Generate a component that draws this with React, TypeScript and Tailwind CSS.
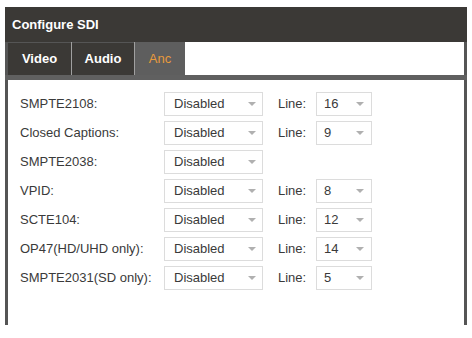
import React from "react";

const rows: { label: string; line?: string }[] = [
  { label: "SMPTE2108:", line: "16" },
  { label: "Closed Captions:", line: "9" },
  { label: "SMPTE2038:" },
  { label: "VPID:", line: "8" },
  { label: "SCTE104:", line: "12" },
  { label: "OP47(HD/UHD only):", line: "14" },
  { label: "SMPTE2031(SD only):", line: "5" },
];

function Arrow() {
  return (
    <svg width="8" height="4" viewBox="0 0 8 4" className="shrink-0">
      <path d="M0 0 L8 0 L4 4 Z" fill="#b0b0b0" />
    </svg>
  );
}

function Select({ value, width, pad }: { value: string; width: string; pad: string }) {
  return (
    <div className={`${width} h-full border border-[#dcdcdc] bg-white flex items-center justify-between ${pad}`}>
      <span>{value}</span>
      <Arrow />
    </div>
  );
}

export default function App() {
  return (
    <div
      className="w-[472px] h-[338px] bg-white text-[13px] text-[#3a3a3a]"
      style={{ fontFamily: '"Liberation Sans", Arial, sans-serif' }}
    >
      <div className="ml-[5px] pt-[7px] w-[462px] flex flex-col">
        <div className="h-[35px] bg-[#3b3936] text-white font-bold flex items-center pl-[7px] pt-[1px]">
          Configure SDI
        </div>
        <div className="flex flex-col h-[283px] border-x-[3px] border-[#555555]">
          <div className="h-[33px] flex bg-white">
            <div className="w-[63px] bg-[#3b3936] border-t border-[#555] text-white font-bold flex items-center justify-center">
              Video
            </div>
            <div className="w-px bg-[#a0a0a0]" />
            <div className="w-[62px] bg-[#3b3936] border-t border-[#555] text-white font-bold flex items-center justify-center">
              Audio
            </div>
            <div className="w-px bg-[#a0a0a0]" />
            <div className="w-[50px] bg-[#5e5e5e] text-[#e89a3c] flex items-center justify-center">
              Anc
            </div>
          </div>
          <div className="h-[5px] bg-[#606060] -mx-[3px]" />
          <div className="flex flex-col gap-[5px] pt-[12px] pl-[12px]">
            {rows.map((r) => (
              <div key={r.label} className="flex items-center h-[24px]">
                <div className="w-[144px]">{r.label}</div>
                <Select value="Disabled" width="w-[99px]" pad="pl-[9px] pr-[6px]" />
                {r.line && (
                  <>
                    <div className="w-[38px] ml-[15px]">Line:</div>
                    <Select value={r.line} width="w-[56px]" pad="pl-[7px] pr-[7px]" />
                  </>
                )}
              </div>
            ))}
          </div>
        </div>
      </div>
    </div>
  );
}
